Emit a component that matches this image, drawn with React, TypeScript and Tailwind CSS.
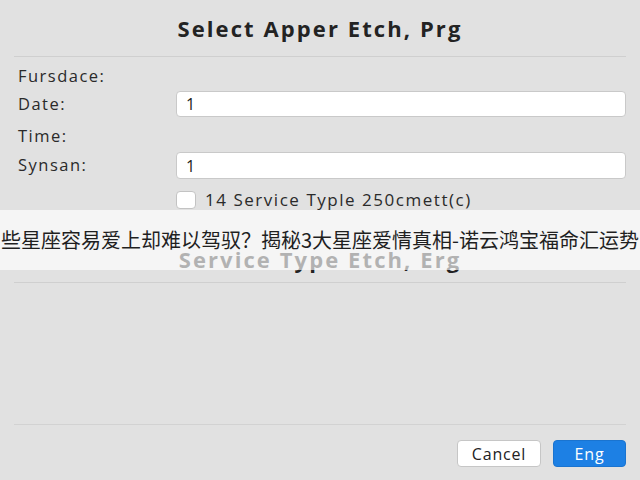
import React from 'react';

const FONT = '"Open Sans", "Noto Sans CJK SC", sans-serif';

const FormRow: React.FC<{ label: string; value?: string; className?: string }> = ({ label, value, className }) => (
  <div className={`flex items-center ${className ?? ''}`}>
    <span className="w-[158px] shrink-0 text-[16.5px] tracking-[0.09em] text-[#2a2a2a]">{label}</span>
    {value !== undefined && (
      <div className="flex-1 h-full flex items-center bg-white border border-[#c9c9c9] rounded-[4px] pl-[9px] text-[16px] text-[#222]">
        {value}
      </div>
    )}
  </div>
);

export default function App() {
  return (
    <div
      className="relative w-[640px] h-[480px] bg-[#e1e1e1] flex flex-col overflow-hidden"
      style={{ fontFamily: FONT }}
    >
      <div className="h-[56px] flex items-center justify-center">
        <h1 className="text-[22px] font-bold tracking-[0.095em] text-[#232323]">Select Apper Etch, Prg</h1>
      </div>
      <div className="mx-[14px] border-t border-[#cfcfcf]" />

      <div className="flex flex-col px-[18px] pt-[6px] pr-[14px]">
        <FormRow label="Fursdace:" className="h-[26px]" />
        <FormRow label="Date:" value="1" className="h-[26px] mt-[2px]" />
        <FormRow label="Time:" className="h-[26px] mt-[6px]" />
        <FormRow label="Synsan:" value="1" className="h-[27px] mt-[3px]" />
        <div className="flex items-center gap-[9px] h-[18px] mt-[12px] pl-[158px]">
          <span className="w-[20px] h-[18px] bg-white border border-[#c3c3c3] rounded-[4px] shrink-0" />
          <span className="text-[17px] tracking-[0.09em] text-[#2a2a2a]">14 Service Typle 250cmett(c)</span>
        </div>
      </div>

      <div className="h-[30px] mt-[35px] flex items-center justify-center">
        <h2 className="text-[22px] font-bold tracking-[0.095em] text-[#232323]">Service Type Etch, Erg</h2>
      </div>
      <div className="mx-[14px] mt-[8px] border-t border-[#cfcfcf]" />

      <div className="flex-1" />

      <div className="mx-[14px] border-t border-[#d2d2d2]" />
      <div className="flex justify-end gap-[12px] px-[14px] pt-[15px] pb-[13px]">
        <button className="w-[84px] h-[27px] bg-white border border-[#c6c6c6] rounded-[4px] text-[16px] tracking-[0.05em] text-[#222]">
          Cancel
        </button>
        <button className="w-[73px] h-[27px] bg-[#1d80e4] border border-[#1a74d0] rounded-[4px] text-[16px] tracking-[0.05em] text-white">
          Eng
        </button>
      </div>

      <div className="absolute left-0 right-0 top-[210px] h-[60px] bg-white/65 flex items-center justify-center overflow-hidden">
        <p
          className="whitespace-nowrap text-[20px] text-[#1f1f1f]"
          style={{ fontFamily: '"Noto Sans CJK SC", sans-serif' }}
        >
          些星座容易爱上却难以驾驭？揭秘3大星座爱情真相-诺云鸿宝福命汇运势
        </p>
      </div>
    </div>
  );
}
